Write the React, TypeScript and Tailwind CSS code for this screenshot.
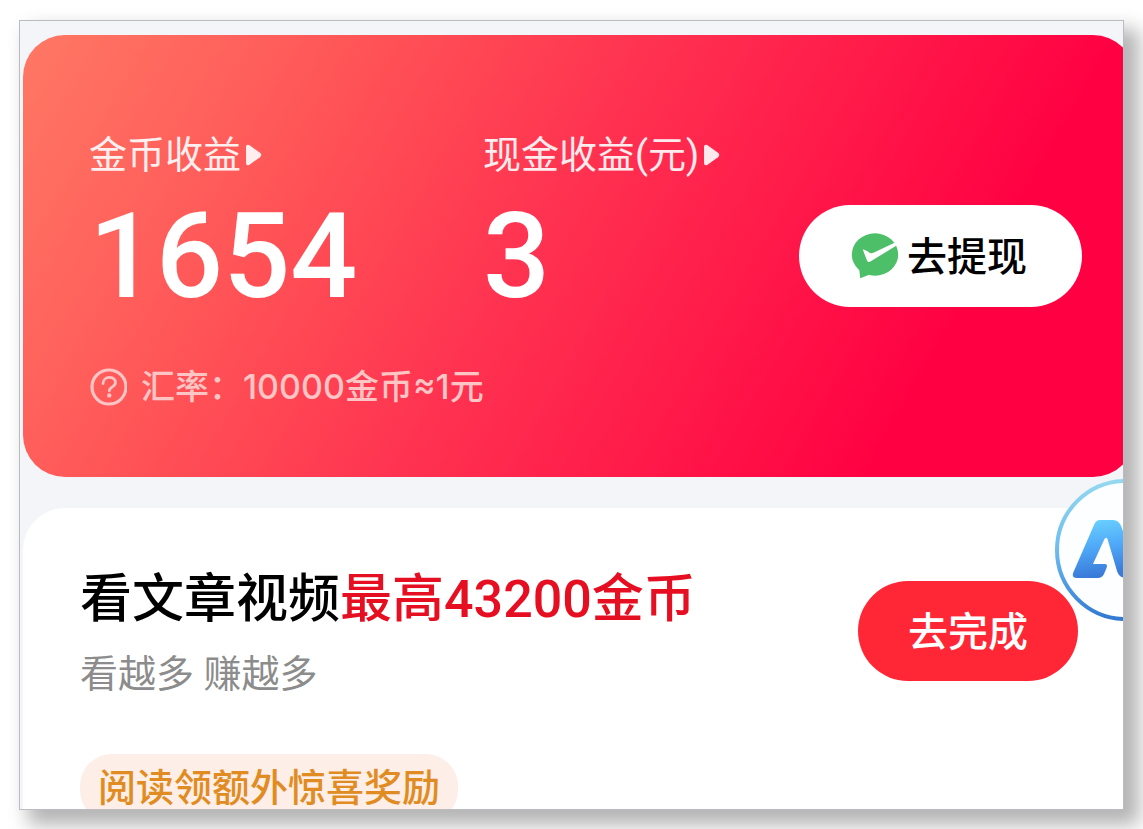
import React from 'react';

const PlayArrow = () => (
    <svg width="17" height="24" viewBox="0 0 17 24" className="shrink-0" aria-hidden="true">
        <path d="M1 4 Q1 0.800 4.200 2 L15 9.800 Q17.500 12 15 14.200 L4.200 22 Q1 23.200 1 20 Z" fill="currentColor" />
    </svg>
);

const HelpIcon = () => (
    <svg width="38" height="38" viewBox="0 0 38 38" fill="none" stroke="currentColor" className="shrink-0" aria-hidden="true">
        <circle cx="20" cy="19" r="17" strokeWidth="3.2" />
        <path d="M14 15.5 C14 7.5 26.5 7.5 26.5 14.5 C26.5 19 20.3 18.6 20.3 22.8" strokeWidth="2.8" strokeLinecap="round" />
        <circle cx="20.3" cy="27.4" r="2.2" fill="currentColor" stroke="none" />
    </svg>
);

const WeChatPayIcon = () => (
    <svg width="48" height="46" viewBox="0 0 48 46" className="shrink-0" aria-hidden="true">
        <ellipse cx="24" cy="21.5" rx="23.2" ry="21.2" fill="#4dbf69" />
        <path d="M8 34 L9.2 45.2 L20 41 Z" fill="#4dbf69" />
        <path d="M11.8 16.6 Q14 16.4 19.2 20.2 Q21 20.6 23 19.6 L43.6 9.8 L45.6 12.4 L19 28.8 Q17.2 29.8 16 27.6 Z" fill="#ffffff" />
    </svg>
);

const AssistantLogo = () => (
    <svg width="142" height="142" viewBox="0 0 142 142" aria-hidden="true">
        <defs>
            <linearGradient id="ring" x1="0" y1="0" x2="0" y2="1">
                <stop offset="0" stopColor="#93d8ef" />
                <stop offset="0.5" stopColor="#6cbcf0" />
                <stop offset="1" stopColor="#3279d2" />
            </linearGradient>
            <linearGradient id="mark" x1="0" y1="0" x2="0.15" y2="1">
                <stop offset="0" stopColor="#6cd3ff" />
                <stop offset="0.5" stopColor="#4fa9f8" />
                <stop offset="1" stopColor="#3a7ad8" />
            </linearGradient>
        </defs>
        <circle cx="71" cy="71" r="69" fill="#fdfeff" stroke="url(#ring)" strokeWidth="4" />
        <path
            d="M45 41 H58 Q64 41 66.5 48 L83 94 Q84.500 99 79 99 H71 Q64 99 62 92 L52.500 60 Q51 57 49 61 L38 85 H50 Q53 85 51.500 89 L49 95 Q47 99 43 99 H22 Q16 99 18.500 93 L39 46 Q41 41 45 41 Z"
            fill="url(#mark)"
        />
    </svg>
);

interface BalanceProps {
    label: string;
    value: string;
}

const Balance = ({ label, value }: BalanceProps) => (
    <div>
        <button type="button" className="flex items-center gap-1 text-[38px] leading-[48px] text-white/90">
            {label}
            <PlayArrow />
        </button>
        <p className="mt-5 text-[118px] leading-[116px] font-medium text-white">{value}</p>
    </div>
);

const App = () => {
    return (
        <div className="h-screen bg-white px-[19px] pt-5 pb-[19px] font-['Roboto','Noto_Sans_CJK_SC',sans-serif]">
            <main className="relative flex h-full flex-col overflow-hidden border border-[#b9bcc0] bg-[#f4f5f9] pt-[14px] pl-[3px] shadow-[12px_12px_18px_3px_#b4b4b4]">
                {/* Earnings */}
                <section className="-mr-3 flex shrink-0 items-center justify-between rounded-[42px] bg-[linear-gradient(120deg,#ff7864_0%,#ff5c5a_20%,#ff4e55_29%,#ff3150_47%,#ff0042_81%)] pr-[53px] pl-[66px]">
                    <div className="pt-24 pb-[66px]">
                        <div className="grid grid-cols-[394px_auto]">
                            <Balance label="金币收益" value="1654" />
                            <Balance label="现金收益(元)" value="3" />
                        </div>
                        <p className="mt-12 flex items-center gap-[14px] text-[34px] leading-[48px] font-medium text-[#ffc4c4]">
                            <HelpIcon />
                            <span className="font-['Inter','Noto_Sans_CJK_SC',sans-serif]">汇率：10000金币≈1元</span>
                        </p>
                    </div>
                    <button
                        type="button"
                        className="flex h-[102px] shrink-0 items-center gap-2 rounded-full bg-white pr-[55px] pl-[52px] text-[40px] font-medium text-black"
                    >
                        <WeChatPayIcon />
                        <span className="pt-1">去提现</span>
                    </button>
                </section>

                {/* Reading task */}
                <section className="mt-[31px] -mr-3 flex grow items-start justify-between rounded-t-[42px] bg-white pt-[62px] pr-[57px] pl-[57px]">
                    <div>
                        <h2 className="text-[52px] leading-[60px] font-medium text-black">
                            看文章视频<span className="text-[#e60f22]">最高43200金币</span>
                        </h2>
                        <p className="mt-5 text-[38px] leading-[48px] text-[#8c8c8c]">看越多 赚越多</p>
                        <p className="mt-14 w-fit rounded-[32px] bg-[#fdeee7] px-[18px] py-2 text-[38px] leading-[52px] font-medium text-[#e08c22]">
                            阅读领额外惊喜奖励
                        </p>
                    </div>
                    <button
                        type="button"
                        className="mt-[11px] h-[100px] shrink-0 rounded-full bg-[#ff2635] px-[50px] pt-1 text-[40px] font-medium text-white"
                    >
                        去完成
                    </button>
                </section>

                {/* Floating assistant, half hidden past the right edge */}
                <button type="button" aria-label="AI" className="absolute top-[458px] -right-[74px] rounded-full">
                    <AssistantLogo />
                </button>
            </main>
        </div>
    );
};

export default App;
